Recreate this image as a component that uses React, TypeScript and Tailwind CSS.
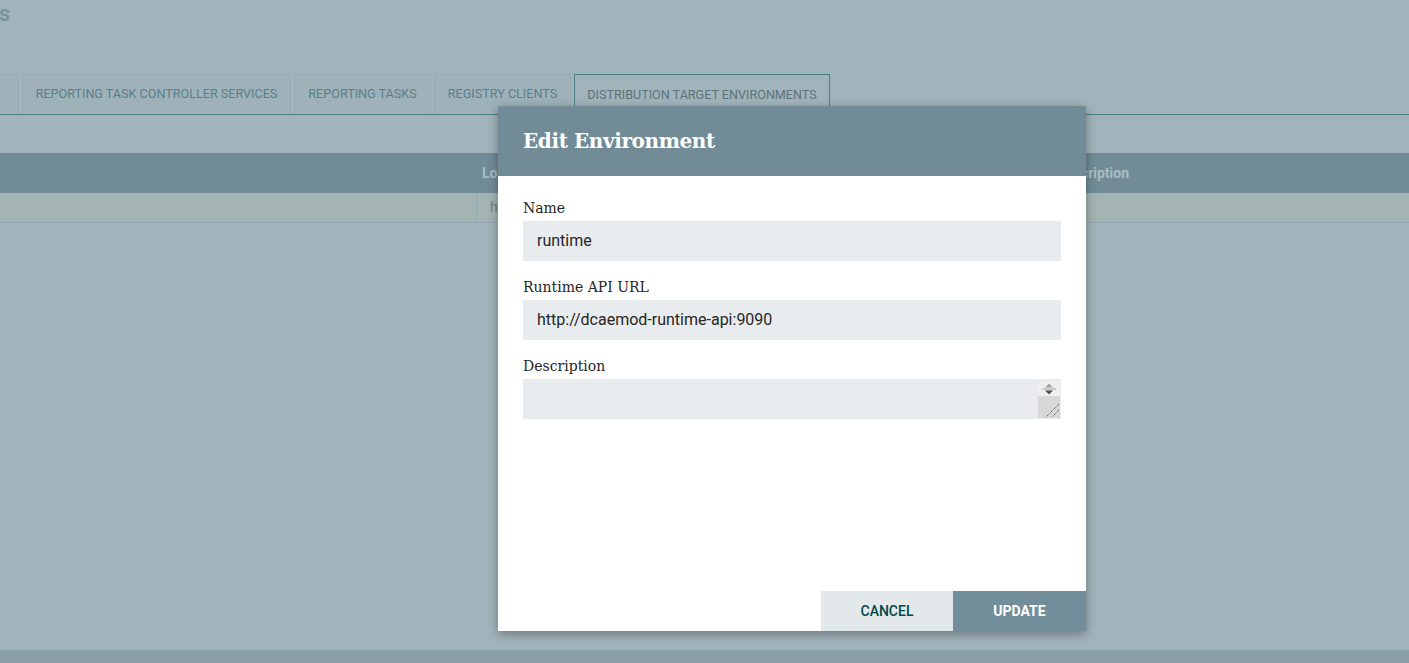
import React from "react";

const roboto = { fontFamily: "Roboto, 'Liberation Sans', sans-serif" };
const slab = { fontFamily: "'DejaVu Serif', 'Liberation Serif', serif" };

function Field({ label, value, area }: { label: string; value?: string; area?: boolean }) {
  return (
    <div className="flex flex-col">
      <div className="h-[20px] leading-[20px] text-[14px] text-[#262626]" style={slab}>
        {label}
      </div>
      <div
        className="mt-[3px] h-[40px] bg-[#e9ecee] flex items-center px-[14px] text-[16px] text-[#262626] relative"
        style={roboto}
      >
        {value}
        {area && (
          <div className="absolute right-[1px] top-[2px] w-[22px] h-[37px] flex flex-col">
            <div className="h-[15px] bg-[#efefef] flex items-center justify-center">
              <svg width="16" height="14" viewBox="0 0 16 14">
                <path d="M4 5.5 L8 1.5 L12 5.5 Z" fill="#a3a3a3" />
                <line x1="1" y1="7" x2="15" y2="7" stroke="#a3a3a3" strokeWidth="1" />
                <path d="M4 8.5 L12 8.5 L8 12.5 Z" fill="#505050" />
              </svg>
            </div>
            <div className="flex-1 bg-[#d8d8d8] relative">
              <svg width="22" height="22" viewBox="0 0 22 22" className="absolute right-0 bottom-0">
                <line x1="21" y1="8" x2="8" y2="21" stroke="#444" strokeWidth="1" strokeDasharray="1 1" />
                <line x1="21" y1="14" x2="14" y2="21" stroke="#444" strokeWidth="1" strokeDasharray="1 1" />
              </svg>
            </div>
          </div>
        )}
      </div>
    </div>
  );
}

export default function App() {
  const tabs = [
    { label: "REPORTING TASK CONTROLLER SERVICES", w: "w-[269px]" },
    { label: "REPORTING TASKS", w: "w-[137px]" },
    { label: "REGISTRY CLIENTS", w: "w-[137px]" },
  ];
  return (
    <div className="w-[1409px] h-[663px] bg-[#a2b4bb] relative overflow-hidden flex flex-col" style={roboto}>
      <div className="h-[74px] shrink-0 pt-[1px]">
        <div className="text-[22px] font-bold text-[#7b95a0] leading-[26px] -ml-[1px]">s</div>
      </div>
      <div className="h-[41px] shrink-0 flex items-end gap-[3px] border-b border-[#4e7f84]">
        <div className="w-[19px] h-[40px] bg-[#9fb2b9] border border-l-0 border-b-0 border-[#97acb3]" />
        {tabs.map((t) => (
          <div
            key={t.label}
            className={`${t.w} h-[40px] bg-[#9fb2b9] border border-b-0 border-[#97acb3] flex items-center justify-center text-[12.6px] text-[#58808a] whitespace-nowrap`}
          >
            {t.label}
          </div>
        ))}
        <div className="w-[256px] h-[41px] -mb-[1px] bg-[#a2b4bb] border border-b-0 border-[#4e7f84] flex items-center justify-center text-[12.6px] text-[#5a7278] whitespace-nowrap">
          DISTRIBUTION TARGET ENVIRONMENTS
        </div>
      </div>
      <div className="h-[38px] shrink-0" />
      <div className="h-[40px] shrink-0 bg-[#718c97] flex items-center text-[14px] font-bold text-[#a9bcc3]">
        <div className="w-[482px] shrink-0" />
        <div className="w-[16px] shrink-0 overflow-hidden whitespace-nowrap">Location</div>
        <div className="w-[559px] shrink-0" />
        <div className="flex-1">Description</div>
      </div>
      <div className="h-[30px] shrink-0 bg-[#a3b4b2] border-b border-[#93a8ae] flex text-[14px] text-[#6f8288]">
        <div className="w-[477px] shrink-0 border-r border-[#93a8ad]" />
        <div className="pl-[13px] w-[21px] overflow-hidden whitespace-nowrap flex items-center">http</div>
      </div>
      <div className="flex-1" />
      <div className="h-[13px] shrink-0 bg-[#8a9ea5]" />

      <div className="absolute left-[498px] top-[106px] w-[588px] h-[525px] bg-white flex flex-col shadow-[0_3px_10px_rgba(0,0,0,0.35)]">
        <div className="h-[70px] shrink-0 bg-[#718c97] flex items-center px-[25px]">
          <div className="text-white font-bold text-[20px] tracking-[-0.4px]" style={slab}>
            Edit Environment
          </div>
        </div>
        <div className="flex-1 flex flex-col gap-[16px] pt-[22px] px-[25px]">
          <Field label="Name" value="runtime" />
          <Field label="Runtime API URL" value="http://dcaemod-runtime-api:9090" />
          <Field label="Description" area />
        </div>
        <div className="flex justify-end h-[40px] shrink-0">
          <div className="w-[132px] bg-[#e3e8eb] flex items-center justify-center text-[14px] font-medium text-[#004849]">
            CANCEL
          </div>
          <div className="w-[133px] bg-[#728e9b] flex items-center justify-center text-[14px] font-bold text-white">
            UPDATE
          </div>
        </div>
      </div>
    </div>
  );
}
